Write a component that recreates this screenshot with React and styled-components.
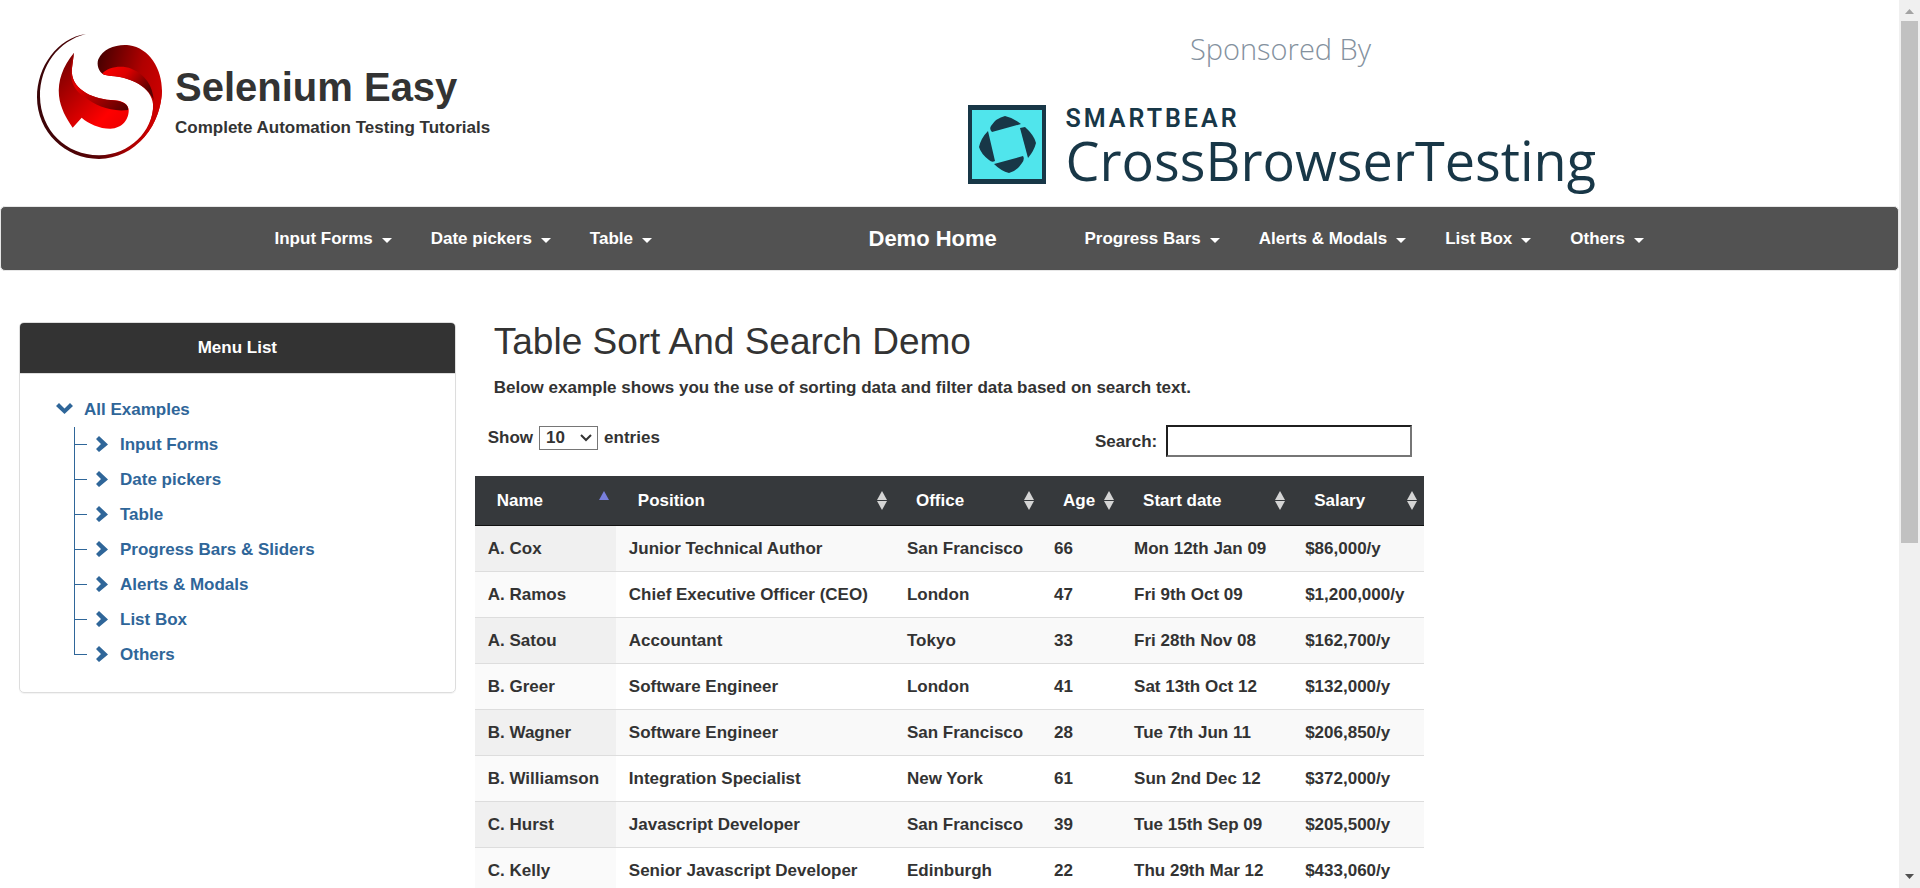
import React from 'react';
import styled, { createGlobalStyle } from 'styled-components';

const Global = createGlobalStyle`
  * { box-sizing: border-box; }
  html, body { margin: 0; padding: 0; }
  body {
    background: #fff;
    color: #333;
    font: bold 17px/25px "Liberation Sans", Arial, Helvetica, sans-serif;
  }
  a { color: inherit; text-decoration: none; }
  h1, h2, h3, p, ul { margin: 0; padding: 0; }
  ul { list-style: none; }
`;

const Window = styled.div`
  display: flex;
  height: 100vh;
  overflow: hidden;
`;

const Page = styled.div`
  flex: 1;
  min-width: 0;
`;

const ScrollBar = styled.div`
  flex: none;
  width: 21px;
  padding: 9px 2px;
  background: #f0f0f0;
  display: flex;
  flex-direction: column;
  align-items: center;
`;

const ScrollArrow = styled.svg`
  flex: none;
  display: block;
  width: 9px;
  height: 5px;
`;

const ScrollThumb = styled.div`
  width: 17px;
  height: 60%;
  margin: 7px 0 auto;
  background: #c1c1c1;
`;

const Header = styled.header`
  display: grid;
  grid-template-columns: 1fr 1fr;
  height: 206px;
`;

const Brand = styled.a`
  display: flex;
  align-items: flex-start;
  gap: 13px;
  padding: 26px 0 0 28px;
`;

const BrandText = styled.div`
  padding-top: 36px;
`;

const BrandName = styled.h1`
  font-size: 40px;
  line-height: 50px;
`;

const Tagline = styled.p`
  padding-top: 3px;
`;

const Sponsor = styled.a`
  display: flex;
  flex-direction: column;
  padding: 26px 0 0 18px;
  color: #183747;
  font-family: "Open Sans", "Noto Sans", sans-serif;
  font-weight: 400;
`;

const SponsoredBy = styled.p`
  width: 626px;
  text-align: center;
  color: #84919e;
  font-size: 29px;
  font-weight: 300;
  line-height: 46px;
`;

const SponsorLogo = styled.div`
  display: flex;
  gap: 20px;
  padding-top: 33px;
`;

const SponsorText = styled.div`
  display: flex;
  flex-direction: column;
`;

const SponsorMaker = styled.span`
  font-family: Roboto, sans-serif;
  font-weight: 600;
  font-size: 25px;
  letter-spacing: 3px;
  line-height: 28px;
`;

const SponsorProduct = styled.span`
  font-size: 54px;
  line-height: 54px;
`;

const NavBar = styled.nav`
  height: 65px;
  border: 1px solid #e7e7e7;
  border-radius: 5px;
  background: #525252;
  color: #fff;
`;

const NavInner = styled.div`
  display: grid;
  grid-template-columns: 594px 216px 1fr;
  align-items: center;
  max-width: 1462px;
  height: 100%;
  margin: 0 auto;
  padding: 0 36px;
`;

const NavList = styled.ul`
  display: flex;
`;

const NavLink = styled.a`
  display: flex;
  align-items: center;
  gap: 9px;
  padding: 0 19px 0 20px;
  white-space: nowrap;
`;

const HomeLink = styled.a`
  padding: 0 20px;
  font-size: 22px;
`;

const Caret = styled.svg`
  width: 10px;
  height: 5px;
  margin-top: 3px;
`;

const Content = styled.div`
  display: grid;
  grid-template-columns: 1fr 2fr 1fr;
  align-items: start;
  padding-top: 51px;
`;

const Panel = styled.aside`
  margin: 0 19px;
  border: 1px solid #ddd;
  border-radius: 5px;
  box-shadow: 0 1px 1px rgba(0, 0, 0, 0.05);
  overflow: hidden;
`;

const PanelTitle = styled.h3`
  padding: 12px 12px 13px;
  border-bottom: 1px solid #ddd;
  background: #333;
  color: #fff;
  font-size: 17px;
  text-align: center;
`;

const Tree = styled.div`
  padding: 18px 36px 20px;
  color: #2f6699;
`;

const TreeRoot = styled.a`
  display: flex;
  align-items: center;
  gap: 11px;
  height: 35px;
`;

const TreeList = styled.ul`
  margin-left: 18px;
`;

const TreeItem = styled.li`
  display: flex;
  height: 35px;
  &::before {
    content: "";
    width: 12px;
    height: ${(p) => (p.$last ? '18px' : '35px')};
    border-left: 1px solid #2f6699;
    background: linear-gradient(#2f6699, #2f6699) 0 17px / 12px 1px no-repeat;
  }
`;

const TreeLink = styled.a`
  display: flex;
  align-items: center;
  gap: 12px;
  padding-left: 9px;
`;

const Main = styled.main`
  min-width: 0;
`;

const Title = styled.h2`
  padding-left: 19px;
  font-size: 37px;
  font-weight: 400;
  line-height: 40px;
`;

const Intro = styled.p`
  padding: 13px 19px 0;
`;

const Controls = styled.div`
  display: flex;
  justify-content: space-between;
  align-items: flex-start;
  padding: 25px 12px 19px 13px;
`;

const LengthLabel = styled.label`
  display: flex;
  align-items: center;
  gap: 6px;
`;

const SelectBox = styled.span`
  display: grid;
  align-items: center;
`;

const Select = styled.select`
  grid-area: 1 / 1;
  appearance: none;
  width: 59px;
  height: 24px;
  padding: 0 6px;
  border: 1px solid #767676;
  border-radius: 0;
  background: #fff;
  color: #333;
  font: inherit;
  line-height: 22px;
`;

const SelectArrow = styled.svg`
  grid-area: 1 / 1;
  justify-self: end;
  width: 12px;
  height: 8px;
  margin-right: 6px;
  pointer-events: none;
`;

const SearchLabel = styled.label`
  display: flex;
  align-items: center;
  gap: 9px;
`;

const SearchInput = styled.input`
  width: 246px;
  height: 32px;
  border: 2px solid;
  border-color: #1f1f1f #767676 #767676 #1f1f1f;
  background: #fff;
  color: #333;
  font: inherit;
`;

const Table = styled.table`
  width: 100%;
  table-layout: fixed;
  border-collapse: separate;
  border-spacing: 0;
  white-space: nowrap;
`;

const HeadCell = styled.th`
  width: calc(100% * ${(p) => p.$share} / 949);
  height: 50px;
  padding: 0 7px 0 22px;
  border-bottom: 1px solid #111;
  background: #36393c;
  color: #fff;
  text-align: left;
`;

const HeadInner = styled.div`
  display: flex;
  justify-content: space-between;
  align-items: center;
`;

const SortIcon = styled.svg`
  flex: none;
  width: 10px;
  height: 19px;
`;

const Row = styled.tr`
  background: #fff;
  & td:first-child { background: #fafafa; }
  &:nth-child(odd) { background: #f9f9f9; }
  &:nth-child(odd) td:first-child { background: #f0f0f0; }
`;

const Cell = styled.td`
  height: 46px;
  padding: 0 0 0 13px;
  border-bottom: 1px solid #ddd;
`;

const SeleniumLogo = () => (
  <svg width="134" height="138" viewBox="0 0 402 414" aria-hidden="true">
    <defs>
      <linearGradient id="ring" x1="0" y1="0" x2="1" y2="0">
        <stop offset="0" stopColor="#3a0508" />
        <stop offset="0.5" stopColor="#5a0205" />
        <stop offset="0.75" stopColor="#b00000" />
        <stop offset="1" stopColor="#c80000" />
      </linearGradient>
      <linearGradient id="blade" x1="0" y1="0.2" x2="1" y2="0.6">
        <stop offset="0" stopColor="#4a0000" />
        <stop offset="0.6" stopColor="#b00000" />
        <stop offset="1" stopColor="#d00000" />
      </linearGradient>
      <linearGradient id="fold" x1="0" y1="0" x2="1" y2="0.5">
        <stop offset="0" stopColor="#ff0000" />
        <stop offset="0.45" stopColor="#dd0000" />
        <stop offset="1" stopColor="#5a0000" />
      </linearGradient>
      <linearGradient id="leaf" x1="0" y1="0" x2="1" y2="1">
        <stop offset="0" stopColor="#6a0000" />
        <stop offset="0.4" stopColor="#b80000" />
        <stop offset="0.75" stopColor="#ff0000" />
        <stop offset="1" stopColor="#e80000" />
      </linearGradient>
      <linearGradient id="leafFold" x1="0" y1="0" x2="1" y2="1">
        <stop offset="0" stopColor="#9a0000" />
        <stop offset="0.35" stopColor="#e60000" />
        <stop offset="1" stopColor="#520000" />
      </linearGradient>
    </defs>
    <path
      fill="url(#ring)"
      d="M174 24 C88 36 27 122 27 214 C27 318 112 399 213 399 C322 399 402 296 402 190 L376 238 C374 315 306 387 214 388 C116 389 37 314 36 211 C35 120 92 44 174 24Z"
    />
    <path
      fill="url(#blade)"
      d="M228 146 C212 139 205 116 211 100 C225 68 265 54 303 58 C364 66 402 128 402 196 C399 255 376 311 335 348 C361 309 377 270 375 234 C371 185 310 153 250 150Z"
    />
    <path
      fill="url(#fold)"
      d="M223 143 C238 124 279 116 310 128 C350 143 375 180 377 222 C356 174 300 154 250 150 C240 149 230 147 223 143Z"
    />
    <path
      fill="url(#leaf)"
      d="M138 80 C104 122 89 164 93 209 C97 245 114 276 134 305 L161 275 C181 293 214 308 247 308 C284 308 304 278 302 250 C298 229 279 223 248 222 C190 218 125 187 132 126Z"
    />
    <path
      fill="url(#leafFold)"
      d="M138 80 C123 126 118 181 171 214 C201 238 249 259 300 252 C304 239 287 224 248 222 C190 218 125 187 132 126Z"
    />
  </svg>
);

const CrossBrowserLogo = () => (
  <svg width="78" height="79" viewBox="0 0 78 79" aria-hidden="true">
    <rect width="78" height="79" fill="#183747" />
    <rect x="4" y="5" width="70" height="69" fill="#50e5ec" />
    <g fill="#183747">
      <path d="M23 21 Q28 13 37 11 Q46 13 53 19 L24 27Q21 24 23 21Z" />
      <path d="M52 23 L57 22 Q66 30 68 38 Q66 46 60 53Z" />
      <path d="M26 59 L55 51 Q57 54 54 58 Q49 66 41 68 Q33 66 26 59Z" />
      <path d="M20 26 L27 56 Q24 58 21 55 Q13 49 11 42 Q13 33 20 26Z" />
    </g>
  </svg>
);

const Chevron = ({ down }) =>
  down ? (
    <svg width="17" height="17" viewBox="0 0 17 17" aria-hidden="true">
      <path d="M0 5 L3 2 L8.500 7.500 L14 2 L17 5 L8.500 13Z" fill="currentColor" />
    </svg>
  ) : (
    <svg width="12" height="17" viewBox="0 0 12 17" aria-hidden="true">
      <path d="M0 3 L3 0 L12 8.500 L3 16 L0 13 L5 8Z" fill="currentColor" />
    </svg>
  );

const Sort = ({ active }) => (
  <SortIcon viewBox="0 0 10 19" aria-hidden="true">
    <path d="M0 9 L5 0 L10 9Z" fill={active ? '#787edb' : '#d5d5d5'} />
    {!active && <path d="M0 10 L5 19 L10 10Z" fill="#d5d5d5" />}
  </SortIcon>
);

const Menu = ({ label }) => (
  <li>
    <NavLink href="#">
      {label}
      <Caret viewBox="0 0 10 5" aria-hidden="true">
        <path d="M0 0H10L5 5Z" fill="#fff" />
      </Caret>
    </NavLink>
  </li>
);

const leftMenus = ['Input Forms', 'Date pickers', 'Table'];
const rightMenus = ['Progress Bars', 'Alerts & Modals', 'List Box', 'Others'];
const examples = [
  'Input Forms',
  'Date pickers',
  'Table',
  'Progress Bars & Sliders',
  'Alerts & Modals',
  'List Box',
  'Others',
];

// Column label and its share of the table's width.
const columns = [
  ['Name', 141],
  ['Position', 278],
  ['Office', 147],
  ['Age', 80],
  ['Start date', 171],
  ['Salary', 132],
];

const people = [
  ['A. Cox', 'Junior Technical Author', 'San Francisco', '66', 'Mon 12th Jan 09', '$86,000/y'],
  ['A. Ramos', 'Chief Executive Officer (CEO)', 'London', '47', 'Fri 9th Oct 09', '$1,200,000/y'],
  ['A. Satou', 'Accountant', 'Tokyo', '33', 'Fri 28th Nov 08', '$162,700/y'],
  ['B. Greer', 'Software Engineer', 'London', '41', 'Sat 13th Oct 12', '$132,000/y'],
  ['B. Wagner', 'Software Engineer', 'San Francisco', '28', 'Tue 7th Jun 11', '$206,850/y'],
  ['B. Williamson', 'Integration Specialist', 'New York', '61', 'Sun 2nd Dec 12', '$372,000/y'],
  ['C. Hurst', 'Javascript Developer', 'San Francisco', '39', 'Tue 15th Sep 09', '$205,500/y'],
  ['C. Kelly', 'Senior Javascript Developer', 'Edinburgh', '22', 'Thu 29th Mar 12', '$433,060/y'],
];

export default function App() {
  return (
    <>
      <Global />
      <Window>
        <Page>
          <Header>
            <Brand href="#">
              <SeleniumLogo />
              <BrandText>
                <BrandName>Selenium Easy</BrandName>
                <Tagline>Complete Automation Testing Tutorials</Tagline>
              </BrandText>
            </Brand>
            <Sponsor href="#">
              <SponsoredBy>Sponsored By</SponsoredBy>
              <SponsorLogo>
                <CrossBrowserLogo />
                <SponsorText>
                  <SponsorMaker>SMARTBEAR</SponsorMaker>
                  <SponsorProduct>CrossBrowserTesting</SponsorProduct>
                </SponsorText>
              </SponsorLogo>
            </Sponsor>
          </Header>
          <NavBar>
            <NavInner>
              <NavList>
                {leftMenus.map((label) => (
                  <Menu key={label} label={label} />
                ))}
              </NavList>
              <HomeLink href="#">Demo Home</HomeLink>
              <NavList>
                {rightMenus.map((label) => (
                  <Menu key={label} label={label} />
                ))}
              </NavList>
            </NavInner>
          </NavBar>
          <Content>
            <Panel>
              <PanelTitle>Menu List</PanelTitle>
              <Tree>
                <TreeRoot href="#">
                  <Chevron down />
                  All Examples
                </TreeRoot>
                <TreeList>
                  {examples.map((label, i) => (
                    <TreeItem key={label} $last={i === examples.length - 1}>
                      <TreeLink href="#">
                        <Chevron />
                        {label}
                      </TreeLink>
                    </TreeItem>
                  ))}
                </TreeList>
              </Tree>
            </Panel>
            <Main>
              <Title>Table Sort And Search Demo</Title>
              <Intro>
                Below example shows you the use of sorting data and filter data based on search text.
              </Intro>
              <Controls>
                <LengthLabel>
                  Show
                  <SelectBox>
                    <Select defaultValue="10">
                      <option>10</option>
                      <option>25</option>
                      <option>50</option>
                      <option>100</option>
                    </Select>
                    <SelectArrow viewBox="0 0 12 8" aria-hidden="true">
                      <path d="M1 1 L6 6 L11 1" fill="none" stroke="#333" strokeWidth="2" />
                    </SelectArrow>
                  </SelectBox>
                  entries
                </LengthLabel>
                <SearchLabel>
                  Search:
                  <SearchInput type="search" />
                </SearchLabel>
              </Controls>
              <Table>
                <thead>
                  <tr>
                    {columns.map(([label, share], i) => (
                      <HeadCell key={label} $share={share} scope="col">
                        <HeadInner>
                          {label}
                          <Sort active={i === 0} />
                        </HeadInner>
                      </HeadCell>
                    ))}
                  </tr>
                </thead>
                <tbody>
                  {people.map((person) => (
                    <Row key={person[0]}>
                      {person.map((value, i) => (
                        <Cell key={i}>{value}</Cell>
                      ))}
                    </Row>
                  ))}
                </tbody>
              </Table>
            </Main>
          </Content>
        </Page>
        <ScrollBar aria-hidden="true">
          <ScrollArrow viewBox="0 0 9 5">
            <path d="M0 5H9L4.500 0Z" fill="#a3a3a3" />
          </ScrollArrow>
          <ScrollThumb />
          <ScrollArrow viewBox="0 0 9 5">
            <path d="M0 0H9L4.500 5Z" fill="#505050" />
          </ScrollArrow>
        </ScrollBar>
      </Window>
    </>
  );
}
